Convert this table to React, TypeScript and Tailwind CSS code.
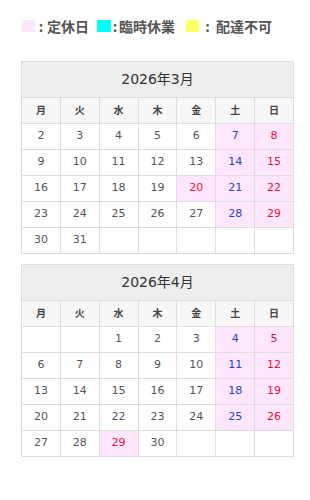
const DOW = ['月', '火', '水', '木', '金', '土', '日'];

type Month = {
  title: string;
  first: number;
  offset: number;
  days: number;
  holidays: number[];
};

// March starts from the 2nd (first partial week is not shown)
const months: Month[] = [
  { title: '2026年3月', first: 2, offset: 0, days: 31, holidays: [20] },
  { title: '2026年4月', first: 1, offset: 2, days: 30, holidays: [29] },
];

function Calendar({ month }: { month: Month }) {
  const cells: (number | null)[] = [];
  for (let i = 0; i < month.offset; i++) cells.push(null);
  for (let d = month.first; d <= month.days; d++) cells.push(d);
  while (cells.length % 7 !== 0) cells.push(null);
  const rows: (number | null)[][] = [];
  for (let i = 0; i < cells.length; i += 7) rows.push(cells.slice(i, i + 7));

  return (
    <table className="w-[273px] border-collapse table-fixed">
      <thead>
        <tr>
          <th colSpan={7} className="h-[36px] border border-[#dddddd] bg-[#eeeeee] text-[14px] font-normal text-[#333333]">
            {month.title}
          </th>
        </tr>
        <tr>
          {DOW.map((d) => (
            <th key={d} className="h-[26px] border border-[#dddddd] bg-[#f7f7f7] text-[10px] font-bold text-[#444444]">
              {d}
            </th>
          ))}
        </tr>
      </thead>
      <tbody>
        {rows.map((row, ri) => (
          <tr key={ri}>
            {row.map((d, ci) => {
              const holiday = d !== null && month.holidays.includes(d);
              const pink = d !== null && (ci >= 5 || holiday);
              let color = 'text-[#555555]';
              if (d !== null && (ci === 6 || holiday)) color = 'text-[#ee1133]';
              else if (d !== null && ci === 5) color = 'text-[#2244cc]';
              return (
                <td
                  key={ci}
                  className={`h-[26px] border border-[#dddddd] text-center text-[11px] ${color} ${pink ? 'bg-[#ffe6ff]' : 'bg-white'}`}
                >
                  {d ?? ''}
                </td>
              );
            })}
          </tr>
        ))}
      </tbody>
    </table>
  );
}

export default function App() {
  return (
    <div className="w-[310px] min-h-[500px] bg-white px-[21px] pt-[20px] font-['DejaVu_Sans','Noto_Sans_CJK_JP',sans-serif]">
      {/* Legend */}
      <div className="flex items-center h-[12px] pl-[1px] text-[14px] leading-none font-bold text-[#555555] font-['Noto_Sans_CJK_JP',sans-serif]">
        <span className="w-[13px] h-[12px] bg-[#ffe6ff]" />
        <span className="w-[12px] text-center">:</span>
        <span>定休日</span>
        <span className="ml-[8px] w-[14px] h-[12px] bg-[#00ffff]" />
        <span className="w-[8px] text-center">:</span>
        <span>臨時休業</span>
        <span className="ml-[11px] w-[13px] h-[12px] bg-[#ffff66]" />
        <span className="w-[17px] text-center">:</span>
        <span>配達不可</span>
      </div>

      <div className="mt-[29px] flex flex-col gap-[10px]">
        {months.map((m) => (
          <Calendar key={m.title} month={m} />
        ))}
      </div>
    </div>
  );
}
